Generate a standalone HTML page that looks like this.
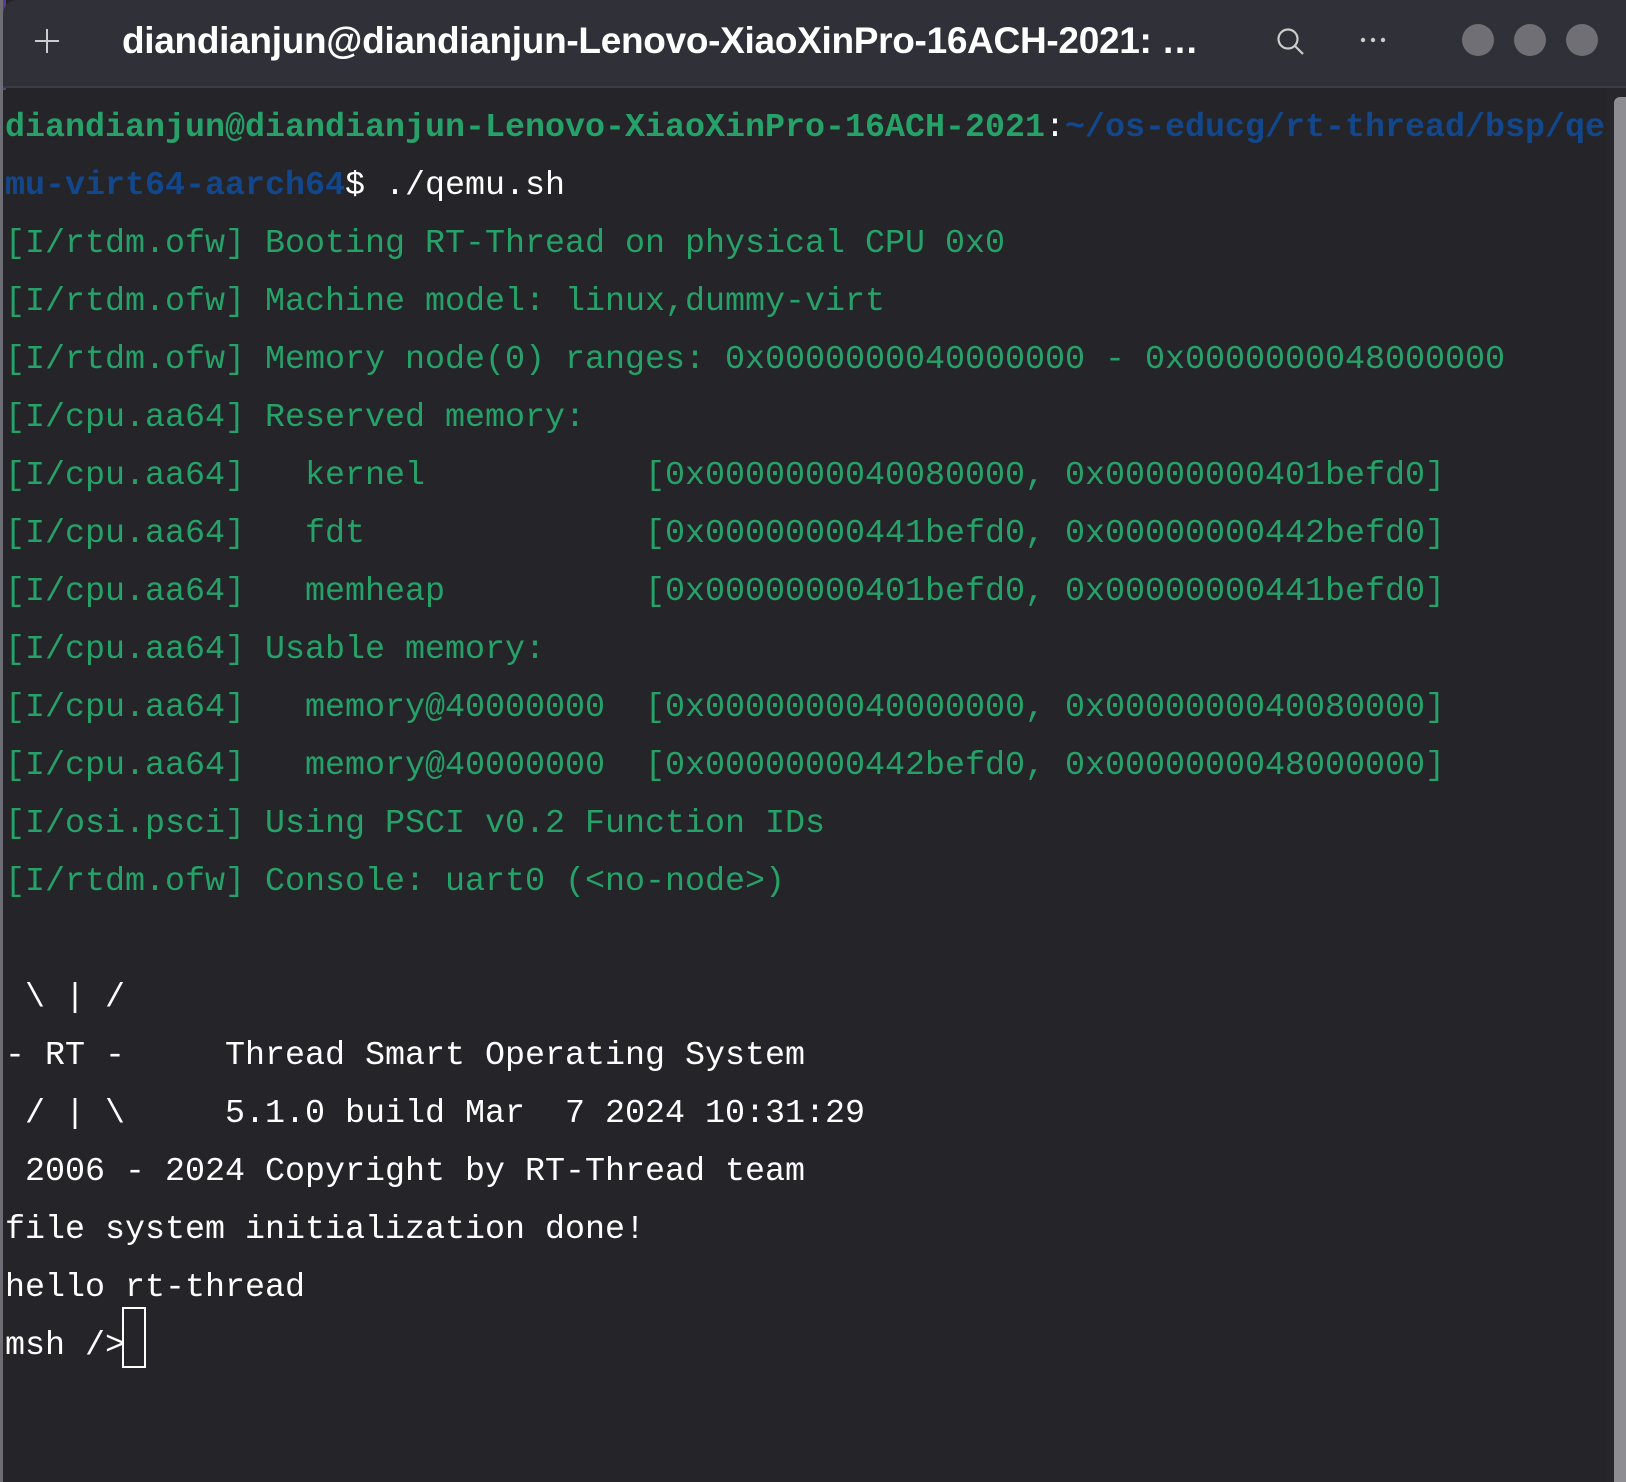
<!DOCTYPE html>
<html><head><meta charset="utf-8">
<style>
html,body{margin:0;padding:0;}
body{width:1626px;height:1482px;overflow:hidden;background:#242429;position:relative;}
#left{position:absolute;left:0;top:0;width:3px;height:1482px;background:#6d6d75;}
#purple{position:absolute;left:0;top:0;width:6px;height:90px;background:#5a3b8c;}
#hdr{position:absolute;left:3px;top:0;width:1623px;height:86px;background:#303038;border-top-left-radius:14px;border-bottom:2px solid #3c3c44;}
#title{position:absolute;left:122px;top:20px;font:bold 37px "Liberation Sans",sans-serif;color:#fff;white-space:nowrap;letter-spacing:-0.3px;}
.dot{position:absolute;top:24px;width:32px;height:32px;border-radius:50%;background:#6f6f75;}
#term{position:absolute;left:5px;top:99px;margin:0;font:33.33px/58px "Liberation Mono",monospace;color:#fff;white-space:pre;}
.g{color:#26a269}.gb{color:#26a269;font-weight:bold}.b{color:#12488b;font-weight:bold}
#cur{position:absolute;left:122px;top:1307px;width:20px;height:57px;border:2px solid #fff;}
#sb{position:absolute;left:1614px;top:97px;width:12px;height:1385px;background:#8d8d92;border-top-left-radius:6px;}
#sbt{position:absolute;left:1606px;top:88px;width:20px;height:1394px;background:#26262b;}
</style></head><body>
<div id="purple"></div>
<div id="left"></div>
<div id="hdr"></div>
<svg style="position:absolute;left:32px;top:26px" width="30" height="30"><path d="M15 3V27M3 15H27" stroke="#ccc" stroke-width="2"/></svg>
<div id="title">diandianjun@diandianjun-Lenovo-XiaoXinPro-16ACH-2021: …</div>
<svg style="position:absolute;left:1275px;top:26px" width="32" height="32"><circle cx="13" cy="13" r="9.5" fill="none" stroke="#ccc" stroke-width="2.2"/><path d="M20 20L28 28" stroke="#ccc" stroke-width="2.2"/></svg>
<svg style="position:absolute;left:1358px;top:34px" width="30" height="12"><circle cx="5" cy="6" r="2.2" fill="#ccc"/><circle cx="15" cy="6" r="2.2" fill="#ccc"/><circle cx="25" cy="6" r="2.2" fill="#ccc"/></svg>
<div class="dot" style="left:1462px"></div>
<div class="dot" style="left:1514px"></div>
<div class="dot" style="left:1566px"></div>
<div id="sbt"></div>
<div id="sb"></div>
<pre id="term"><span class="gb">diandianjun@diandianjun-Lenovo-XiaoXinPro-16ACH-2021</span>:<span class="b">~/os-educg/rt-thread/bsp/qe</span>
<span class="b">mu-virt64-aarch64</span>$ ./qemu.sh
<span class="g">[I/rtdm.ofw] Booting RT-Thread on physical CPU 0x0
[I/rtdm.ofw] Machine model: linux,dummy-virt
[I/rtdm.ofw] Memory node(0) ranges: 0x0000000040000000 - 0x0000000048000000
[I/cpu.aa64] Reserved memory:
[I/cpu.aa64]   kernel           [0x0000000040080000, 0x00000000401befd0]
[I/cpu.aa64]   fdt              [0x00000000441befd0, 0x00000000442befd0]
[I/cpu.aa64]   memheap          [0x00000000401befd0, 0x00000000441befd0]
[I/cpu.aa64] Usable memory:
[I/cpu.aa64]   memory@40000000  [0x0000000040000000, 0x0000000040080000]
[I/cpu.aa64]   memory@40000000  [0x00000000442befd0, 0x0000000048000000]
[I/osi.psci] Using PSCI v0.2 Function IDs
[I/rtdm.ofw] Console: uart0 (&lt;no-node&gt;)</span>

 \ | /
- RT -     Thread Smart Operating System
 / | \     5.1.0 build Mar  7 2024 10:31:29
 2006 - 2024 Copyright by RT-Thread team
file system initialization done!
hello rt-thread
msh /&gt;</pre>
<div id="cur"></div>
</body></html>
